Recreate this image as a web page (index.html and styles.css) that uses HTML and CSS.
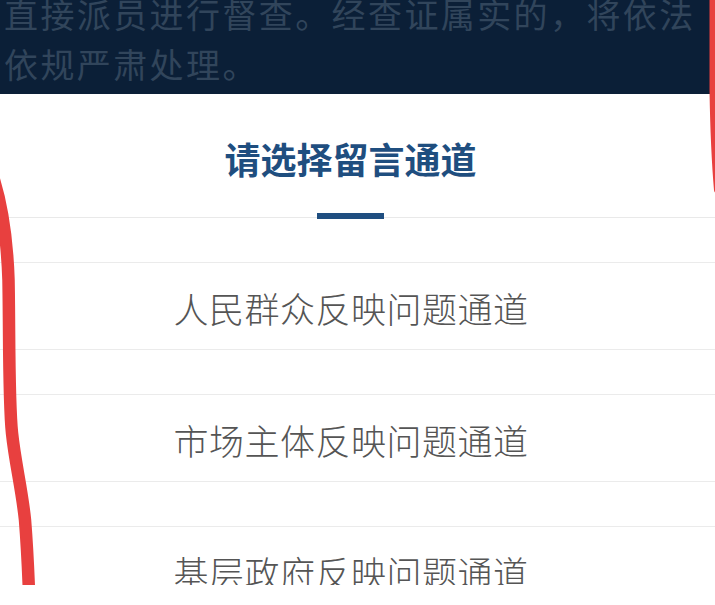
FILE: index.html
```html
<!DOCTYPE html>
<html lang="zh-CN">
<head>
<meta charset="utf-8">
<title>请选择留言通道</title>
<link rel="stylesheet" href="styles.css">
</head>
<body>
<div class="frame">
  <div class="notice">
    <p class="notice-text">直接派员进行督查。经查证属实的，将依法<br>依规严肃处理。</p>
  </div>
  <div class="sheet">
    <div class="sheet-head">
      <h2 class="sheet-title">请选择留言通道</h2>
      <div class="sheet-bar"></div>
    </div>
    <ul class="channels">
      <li class="channel">人民群众反映问题通道</li>
      <li class="channel">市场主体反映问题通道</li>
      <li class="channel">基层政府反映问题通道</li>
    </ul>
  </div>
  <svg class="marks" width="715" height="585" viewBox="0 0 715 585" aria-hidden="true">
    <path class="mark mark-left" d="M -6 180 C 1 203, 7 235, 8.5 280 C 9.5 330, 8.5 400, 12 433 C 15 462, 22 490, 25 520 C 27 545, 28 565, 29 592"/>
    <path class="mark mark-right" d="M 712.5 -5 L 712.5 90 Q 713.5 150 717 190"/>
  </svg>
</div>
</body>
</html>
```
FILE: styles.css
```css
* {
  box-sizing: border-box;
}

html, body {
  margin: 0;
  padding: 0;
  background: #ffffff;
}

body {
  width: 715px;
  height: 605px;
  font-family: "Noto Sans CJK SC", "Noto Sans", sans-serif;
  overflow: hidden;
}

.frame {
  position: relative;
  width: 715px;
  height: 585px;
  overflow: hidden;
  background: #ffffff;
}

.notice {
  height: 94px;
  background: #0b1f37;
  overflow: hidden;
  padding-left: 4px;
}

.notice-text {
  margin: -11px 0 0 0;
  font-size: 34px;
  line-height: 50px;
  letter-spacing: 2.4px;
  color: #31455b;
  white-space: nowrap;
}

.sheet {
  display: flex;
  flex-direction: column;
}

.sheet-head {
  display: flex;
  flex-direction: column;
  align-items: center;
  padding: 40px 14px 0 0;
  border-bottom: 1px solid #e9e9e9;
}

.sheet-title {
  margin: 0;
  font-size: 36px;
  line-height: 48px;
  font-weight: 700;
  color: #1f4e7f;
}

.sheet-bar {
  width: 67px;
  height: 6px;
  margin-top: 31px;
  margin-bottom: -2px;
  background: #1f4e80;
  position: relative;
}

.channels {
  list-style: none;
  margin: 44px 0 0 0;
  padding: 0;
  display: flex;
  flex-direction: column;
  gap: 44px;
}

.channel {
  height: 88px;
  border-top: 1px solid #ebebeb;
  border-bottom: 1px solid #ebebeb;
  display: flex;
  align-items: center;
  justify-content: center;
  padding: 2px 13px 0 0;
  font-size: 35px;
  font-weight: 300;
  letter-spacing: 0.5px;
  color: #555555;
  line-height: 1;
}

.marks {
  position: absolute;
  left: 0;
  top: 0;
  pointer-events: none;
}

.mark {
  fill: none;
  stroke: #e8403f;
  stroke-linecap: round;
}

.mark-left {
  stroke-width: 12.5;
}

.mark-right {
  stroke-width: 6;
}
```
